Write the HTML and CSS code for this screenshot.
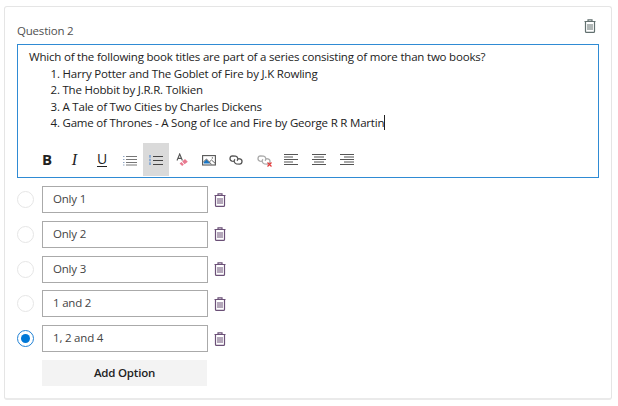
FILE: index.html
```html
<!DOCTYPE html>
<html lang="en">
<head>
<meta charset="utf-8">
<title>Question 2</title>
<link rel="stylesheet" href="styles.css">
</head>
<body>
<svg class="defs" width="0" height="0">
  <symbol id="trash" viewBox="0 0 12 14">
    <path d="M0.5 2.5H11.5M4 2.2V0.8H8V2.2M1.5 2.5V12.4Q1.5 13.4 2.5 13.4H9.5Q10.5 13.4 10.5 12.4V2.5" fill="none" stroke="currentColor" stroke-width="1.2"/>
    <path d="M4 5V11M6 5V11M8 5V11" fill="none" stroke="currentColor" stroke-width="1"/>
  </symbol>
  <symbol id="chain" viewBox="0 0 14 10">
    <path d="M4.6 6.4L3 6.1A2.7 2.7 0 0 1 3.5 .8L6.6 1.2A2.7 2.7 0 0 1 8 5.8M9.4 3.6L11 3.9A2.7 2.7 0 0 1 10.5 9.2L7.4 8.8A2.7 2.7 0 0 1 6 4.2" fill="none" stroke="currentColor" stroke-width="1.3"/>
  </symbol>
</svg>
<main class="card">
  <header class="head">
    <h1 class="title">Question 2</h1>
    <svg class="trash trash-main"><use href="#trash"/></svg>
  </header>
  <section class="editor">
    <div class="content">
      <p class="prompt">Which of the following book titles are part of a series consisting of more than two books?</p>
      <p class="item">1. Harry Potter and The Goblet of Fire by J.K Rowling</p>
      <p class="item">2. The Hobbit by J.R.R. Tolkien</p>
      <p class="item">3. A Tale of Two Cities by Charles Dickens</p>
      <p class="item">4. Game of Thrones - A Song of Ice and Fire by George R R Martin<span class="caret"></span></p>
    </div>
    <div class="toolbar">
      <span class="tool bold">B</span>
      <span class="tool italic">I</span>
      <span class="tool underline">U</span>
      <span class="tool list"><svg width="14" height="12" viewBox="0 0 14 12"><path d="M3 2.5H14M3 5.5H14M3 8.5H14M3 11H14" stroke="#777"/><path d="M0 2.5H1.5M0 5.5H1.5M0 8.5H1.5M0 11H1.5" stroke="#91a6c4"/></svg></span>
      <span class="tool active"><svg width="14" height="12" viewBox="0 0 14 12"><path d="M4 2.5H14M4 6.5H14M4 10.5H14" stroke="#444" stroke-width="1.2"/><path d="M1 1V3.7M1 4.8V7.2M1 8.3V11" stroke="#5b8fd0" stroke-width="1.2"/></svg></span>
      <span class="tool"><svg width="14" height="14" viewBox="0 0 14 14"><path d="M1 7.5L3.7 1L6.4 7.5M2 5.4H5.6" fill="none" stroke="#555" stroke-width="1.1"/><path d="M3.6 10.6L5.4 9L7.8 11.6L6.2 13ZM6.2 8.5L9 6L11.8 8.8L8.6 11.2Z" fill="#e8798f"/></svg></span>
      <span class="tool pic"><svg width="14" height="12" viewBox="0 0 14 12"><rect x=".6" y="1.6" width="12.8" height="9.4" fill="#fff" stroke="#555" stroke-width="1.1"/><path d="M1.8 9.6V8L4.5 5.5L8.3 9.6Z" fill="#1976c5"/><path d="M1.3 8L4.5 5L9.5 10.4M7.3 8L9.5 6L13 9.2" fill="none" stroke="#555" stroke-width=".9"/><circle cx="10.4" cy="3.9" r=".7" fill="#555"/></svg></span>
      <span class="tool chain"><svg width="14" height="10"><use href="#chain"/></svg></span>
      <span class="tool chain off"><svg width="14" height="10"><use href="#chain"/></svg><svg class="cross" width="5" height="5" viewBox="0 0 5 5"><path d="M.5 .5L4.5 4.5M4.5 .5L.5 4.5" stroke="#e33b3b" stroke-width="1.2"/></svg></span>
      <span class="tool align"><svg width="14" height="13" viewBox="0 0 14 13"><path d="M0 1.5H14M0 4H9M0 6.5H14M0 9H9M0 11.5H14" stroke="#555" stroke-width="1.1"/></svg></span>
      <span class="tool align"><svg width="14" height="13" viewBox="0 0 14 13"><path d="M0 1.5H14M2 4H12M0 6.5H14M2 9H12M0 11.5H14" stroke="#555" stroke-width="1.1"/></svg></span>
      <span class="tool"><svg width="14" height="13" viewBox="0 0 14 13"><path d="M0 1.5H14M4 4H14M0 6.5H14M4 9H14M0 11.5H14" stroke="#555" stroke-width="1.1"/></svg></span>
    </div>
  </section>
  <section class="options">
    <div class="option"><span class="radio"></span><div class="field">Only 1</div><svg class="trash"><use href="#trash"/></svg></div>
    <div class="option"><span class="radio"></span><div class="field">Only 2</div><svg class="trash"><use href="#trash"/></svg></div>
    <div class="option"><span class="radio"></span><div class="field">Only 3</div><svg class="trash"><use href="#trash"/></svg></div>
    <div class="option"><span class="radio"></span><div class="field">1 and 2</div><svg class="trash"><use href="#trash"/></svg></div>
    <div class="option"><span class="radio checked"></span><div class="field">1, 2 and 4</div><svg class="trash"><use href="#trash"/></svg></div>
    <div class="add">Add Option</div>
  </section>
</main>
</body>
</html>
```
FILE: styles.css
```css
* { box-sizing: border-box; }
body {
  margin: 0;
  padding: 6px 0 0 4px;
  background: #fff;
  color: #222;
  font: 11.5px/16.5px "Open Sans", "Noto Sans", sans-serif;
  letter-spacing: -0.2px;
}
p, h1 { margin: 0; font: inherit; }
svg { display: block; flex: none; }
.defs { position: absolute; }
.card {
  width: 608px;
  height: 394px;
  padding: 0 12px;
  border: 1px solid #e5e5e5;
  border-bottom: 2px solid #eaeaea;
  border-radius: 3px;
}
.head {
  display: flex;
  justify-content: space-between;
  height: 37px;
  padding: 12px 3px 0 0;
}
.title { padding-top: 4px; color: #505050; }
.trash { width: 12px; height: 14px; color: #6b5077; }
.trash-main { color: #62706f; }
.editor {
  width: 582px;
  height: 134px;
  padding: 4px 0 0;
  border: 1px solid #2f8bd4;
}
.content { height: 94px; padding-left: 11px; white-space: nowrap; }
.item { padding-left: 21.5px; }
.caret {
  display: inline-block;
  width: 1px;
  height: 15px;
  margin-bottom: -3px;
  vertical-align: baseline;
  background: #222;
}
.toolbar { display: flex; gap: 1.25px; padding-left: 16px; }
.tool {
  position: relative;
  display: flex;
  align-items: center;
  justify-content: center;
  width: 26px;
  height: 33px;
  font-size: 14px;
}
.bold { font-size: 15px; font-weight: 700; }
.italic { font: italic 16px "Liberation Serif", serif; }
.underline { padding-left: 1px; text-decoration: underline; text-underline-offset: 2px; }
.list { padding-left: 2px; }
.active { background: #dadada; }
.pic, .chain { padding-right: 3px; }
.align { padding-right: 2px; }
.chain { color: #555; }
.off { color: #aaa; }
.cross { position: absolute; right: 6px; bottom: 9px; }
.options { display: flex; flex-direction: column; gap: 7.75px; padding-top: 8px; }
.option { display: flex; align-items: center; height: 27px; }
.radio {
  display: flex;
  width: 17px;
  height: 17px;
  margin-right: 8px;
  border: 1px solid #e6e6e6;
  border-radius: 50%;
}
.checked { align-items: center; justify-content: center; border-color: #2182d5; }
.checked::after {
  content: "";
  width: 9px;
  height: 9px;
  border-radius: 50%;
  background: #0078d7;
}
.field {
  width: 166px;
  height: 27px;
  margin-right: 6px;
  padding: 4px 10px;
  border: 1px solid #aaa;
  color: #444;
}
.add {
  width: 165px;
  height: 26px;
  margin-left: 25px;
  background: #f3f3f3;
  font-weight: 600;
  line-height: 26px;
  text-align: center;
}
```
